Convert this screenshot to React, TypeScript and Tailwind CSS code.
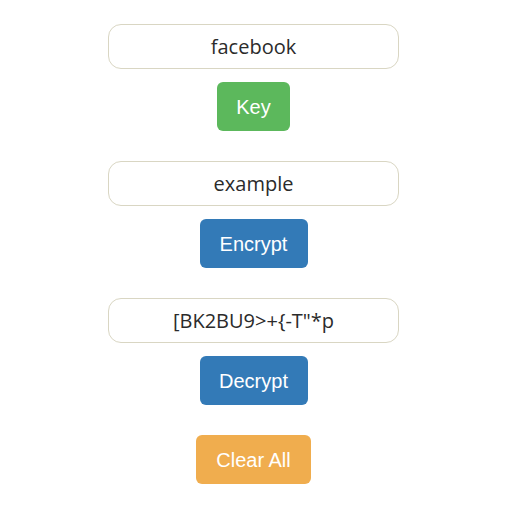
import * as React from "react";

const inputCls =
  "block w-[291px] h-[45px] rounded-[13px] border border-[#d9d6c3] bg-white text-center text-[20px] text-[#2b2b2b] outline-none font-['Open_Sans',sans-serif]";

const btnCls =
  "h-[49px] rounded-[6px] text-[20px] text-white font-['Liberation_Sans',Arial,sans-serif] flex items-center justify-center";

export default function App() {
  const [key, setKey] = React.useState("facebook");
  const [plain, setPlain] = React.useState("example");
  const [cipher, setCipher] = React.useState('[BK2BU9>+{-T"*p');

  return (
    <div className="w-[512px] h-[512px] bg-white flex flex-col items-center pt-[24px] pr-[5px]">
      {/* Key */}
      <input className={inputCls} value={key} onChange={(e) => setKey(e.target.value)} />
      <button className={`${btnCls} mt-[13px] w-[73px] bg-[#5cb85c]`}>Key</button>

      {/* Encrypt */}
      <input
        className={`${inputCls} mt-[30px]`}
        value={plain}
        onChange={(e) => setPlain(e.target.value)}
      />
      <button className={`${btnCls} mt-[13px] w-[108px] bg-[#337ab7]`}>Encrypt</button>

      {/* Decrypt */}
      <input
        className={`${inputCls} mt-[30px]`}
        value={cipher}
        onChange={(e) => setCipher(e.target.value)}
      />
      <button className={`${btnCls} mt-[13px] w-[108px] bg-[#337ab7]`}>Decrypt</button>

      {/* Clear */}
      <button
        className={`${btnCls} mt-[30px] w-[115px] bg-[#f0ad4e]`}
        onClick={() => {
          setKey("");
          setPlain("");
          setCipher("");
        }}
      >
        Clear All
      </button>
    </div>
  );
}
